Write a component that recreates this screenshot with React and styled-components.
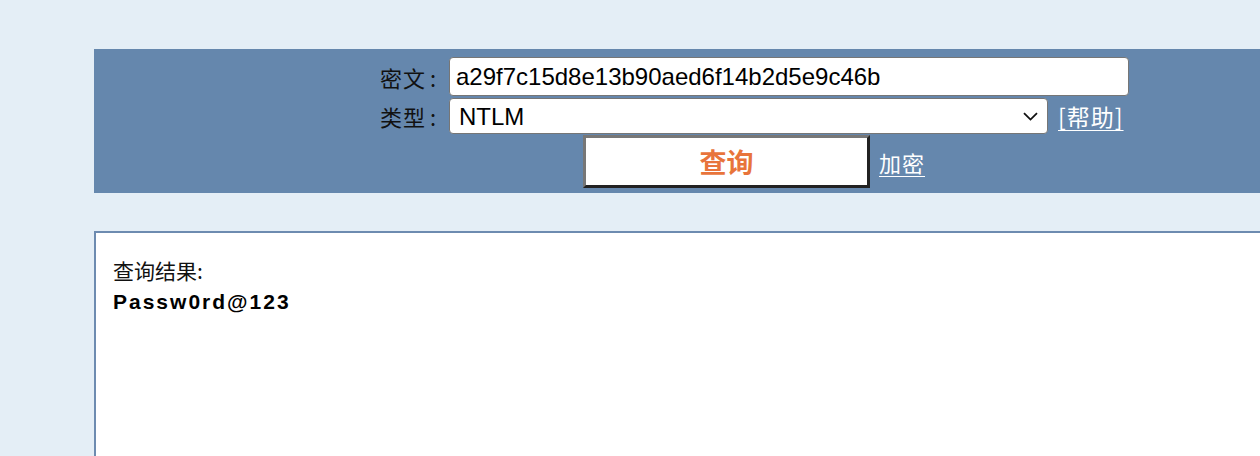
import React from "react";
import styled, { createGlobalStyle } from "styled-components";

const Global = createGlobalStyle`
  html, body { margin: 0; padding: 0; background: #e4eef6; overflow: hidden; }
  body { font-family: "Liberation Sans", "Noto Sans CJK SC", sans-serif; }
`;

const Page = styled.div`
  padding-top: 49px;
  padding-left: 94px;
  height: 456px;
  box-sizing: border-box;
  overflow: hidden;
`;

const Panel = styled.div`
  background: #6587ad;
  height: 144px;
  box-sizing: border-box;
  padding: 8px 0 0 286px;
  display: grid;
  grid-template-columns: 69px auto;
  align-content: start;
  align-items: center;
  row-gap: 2px;
`;

const Label = styled.div`
  font-family: "Noto Sans CJK SC", sans-serif;
  font-size: 22px;
  line-height: 30px;
  color: #111;
  letter-spacing: 1px;
`;

const Colon = styled.span`
  margin-left: 4px;
`;

const Cell = styled.div`
  display: flex;
  align-items: center;
  margin-top: ${(p) => p.$mt || 0}px;
`;

const TextInput = styled.input`
  width: 680px;
  height: 39px;
  box-sizing: border-box;
  border: 1px solid #767676;
  border-radius: 4px;
  background: #fff;
  padding: 0 6px;
  font-family: "Liberation Sans", sans-serif;
  font-size: 24px;
  color: #000;
  outline: none;
`;

const SelectWrap = styled.div`
  position: relative;
  width: 599px;
  height: 36px;
`;

const Select = styled.select`
  appearance: none;
  -webkit-appearance: none;
  display: block;
  width: 100%;
  height: 100%;
  box-sizing: border-box;
  border: 1px solid #767676;
  border-radius: 4px;
  background: #fff;
  padding: 0 9px;
  font-family: "Liberation Sans", sans-serif;
  font-size: 24px;
  color: #000;
  outline: none;
`;

const Chevron = styled.svg`
  position: absolute;
  right: 10px;
  top: 14px;
  pointer-events: none;
`;

const Link = styled.a`
  font-family: "Noto Sans CJK SC", sans-serif;
  font-size: ${(p) => p.$fs || 22}px;
  line-height: 30px;
  color: #fff;
  text-decoration: underline;
  text-underline-offset: 4px;
  text-decoration-thickness: 1px;
  letter-spacing: ${(p) => p.$ls || 0}px;
  margin-left: ${(p) => p.$ml || 0}px;
  cursor: pointer;
`;

const QueryButton = styled.button`
  margin-left: 134px;
  width: 287px;
  height: 53px;
  box-sizing: border-box;
  background: #fff;
  border-style: solid;
  border-width: 3px;
  border-color: #777 #222 #222 #777;
  font-family: "Noto Sans CJK SC", sans-serif;
  font-weight: 700;
  font-size: 27px;
  line-height: 1;
  color: #e8743b;
  padding: 0;
  cursor: pointer;
`;

const Result = styled.div`
  margin-top: 38px;
  margin-right: -10px;
  height: 300px;
  background: #fff;
  border: 2px solid #6d8bb0;
  padding: 20px 17px;
  font-family: "Noto Sans CJK SC", sans-serif;
  font-size: 21px;
  line-height: 34px;
  color: #111;
`;

const ResultValue = styled.div`
  font-family: "Liberation Sans", sans-serif;
  font-weight: 700;
  color: #000;
  font-size: 21px;
  line-height: 30px;
  letter-spacing: 2px;
`;

export default function App() {
  return (
    <>
      <Global />
      <Page>
        <Panel>
          <Label>
            密文<Colon>:</Colon>
          </Label>
          <Cell>
            <TextInput defaultValue="a29f7c15d8e13b90aed6f14b2d5e9c46b" />
          </Cell>
          <Label>
            类型<Colon>:</Colon>
          </Label>
          <Cell>
            <SelectWrap>
              <Select defaultValue="NTLM">
                <option>NTLM</option>
                <option>MD5</option>
                <option>SHA1</option>
              </Select>
              <Chevron width="15" height="9" viewBox="0 0 15 9">
                <path d="M1 1.2 L7.5 7.6 L14 1.2" fill="none" stroke="#111" strokeWidth="1.8" />
              </Chevron>
            </SelectWrap>
            <Link $ml={10} $fs={23} $ls={1}>[帮助]</Link>
          </Cell>
          <div />
          <Cell $mt={-1}>
            <QueryButton>查询</QueryButton>
            <Link $ml={9} $ls={1}>加密</Link>
          </Cell>
        </Panel>
        <Result>
          <div>查询结果:</div>
          <ResultValue>Passw0rd@123</ResultValue>
        </Result>
      </Page>
    </>
  );
}
